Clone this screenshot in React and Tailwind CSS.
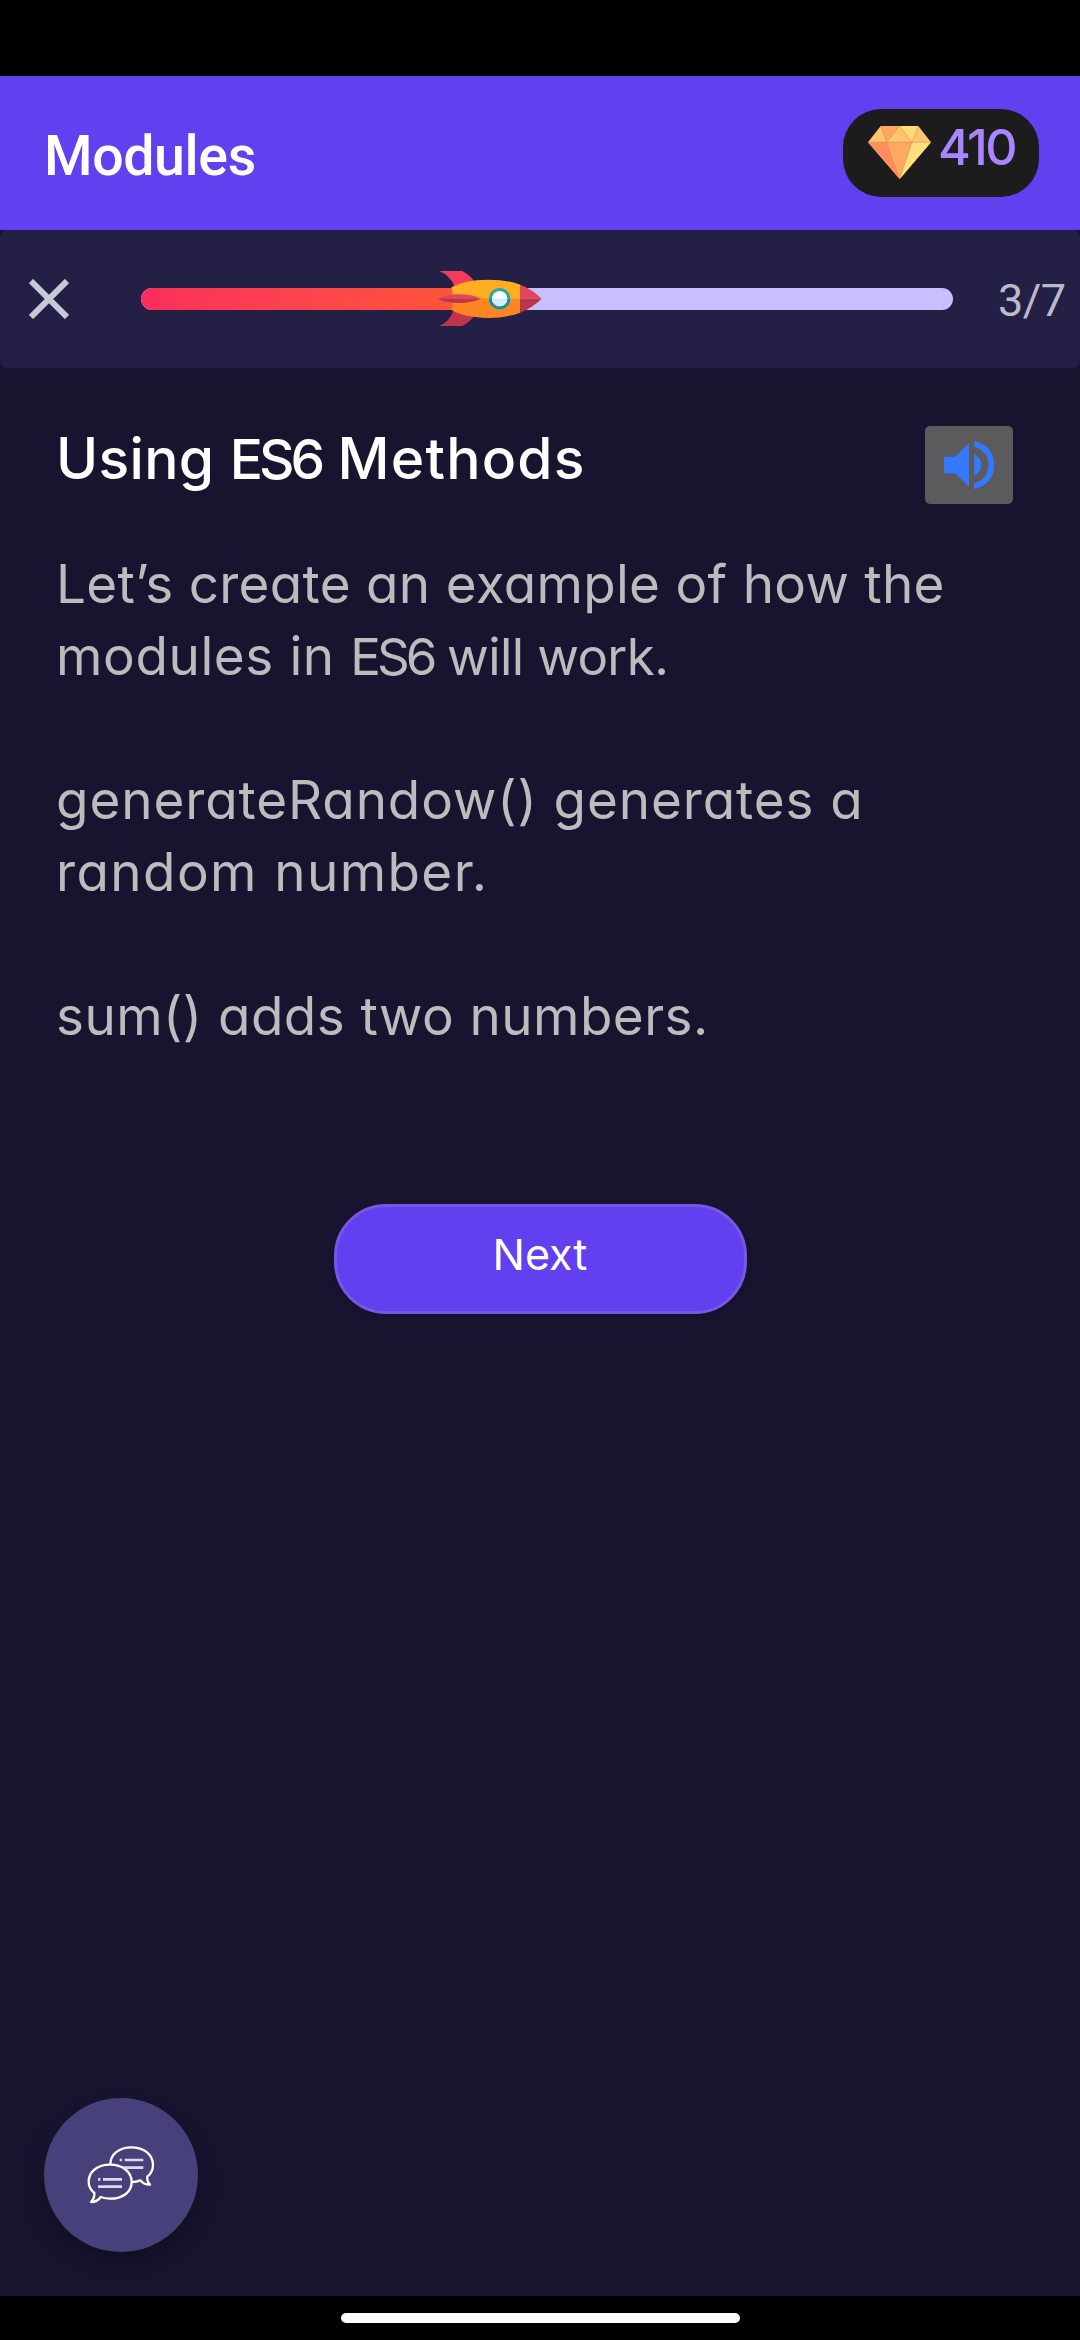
const inter = "font-[Inter,sans-serif] [font-feature-settings:'cv11'] whitespace-nowrap";

const lines = [
  [{ text: "Let’s create an example of how the", cls: "tracking-[0.3px]" }],
  [
    { text: "modules in ", cls: "tracking-[0.6px]" },
    { text: "ES6", cls: "text-[51px] tracking-[-4px]" },
    { text: " will work.", cls: "text-[51px] tracking-[-0.6px]" },
  ],
  [{ text: "\u00a0", cls: "" }],
  [{ text: "generateRandow() generates a", cls: "tracking-[0.9px]" }],
  [{ text: "random number.", cls: "tracking-[1.4px]" }],
  [{ text: "\u00a0", cls: "" }],
  [{ text: "sum() adds two numbers.", cls: "tracking-[0.45px]" }],
];

function Diamond() {
  return (
    <svg className="h-[53px] w-[63px]" viewBox="0 0 189 159">
      <path d="M0 49L38 0H151L189 49L95 159Z" fill="#ffc470" />
      <path d="M38 0H95L56 49Z" fill="#ffa660" />
      <path d="M95 0H151L132 49Z" fill="#ffdb78" />
      <path d="M0 49H56L95 159Z" fill="#ff8e5c" />
      <path d="M56 49H132L95 159Z" fill="#ffa863" />
      <path d="M132 49H189L95 159Z" fill="#ffe07c" />
      <path d="M0 49H189M38 0L56 49L95 159L132 49L151 0M56 49L95 0L132 49" fill="none" stroke="#a87840" strokeOpacity=".5" strokeWidth="2" />
    </svg>
  );
}

function Rocket() {
  return (
    <svg className="absolute left-[296px] top-[-17px] h-[55px] w-[105px]" viewBox="111 93 313 165">
      <path d="M117 93H186Q206 103 222 124L164 142Q151 107 117 93Z" fill="#f33b5c" />
      <path d="M117 258H186Q206 248 222 228L160 210Q149 244 117 258Z" fill="#c1354a" />
      <path d="M153 142Q190 120 265 119Q319 119 360 134V176H157Q158 158 153 142Z" fill="#ffae1f" />
      <path d="M153 210Q190 232 265 234Q319 233 360 218V176H157Q158 194 153 210Z" fill="#ff8424" />
      <path d="M359 134Q394 146 424 176H359Z" fill="#e0475c" />
      <path d="M359 218Q394 205 424 176H359Z" fill="#bb3448" />
      <path d="M111 176Q142 162 176 163Q216 163 242 176Z" fill="#e0475c" />
      <path d="M111 176Q142 189 176 189Q216 188 242 176Z" fill="#bb3448" />
      <circle cx="298" cy="176" r="32" fill="#2aa5a5" />
      <path d="M266 176A32 32 0 0 0 330 176Z" fill="#1f8f98" />
      <circle cx="298" cy="176" r="23" fill="#fff" />
      <path d="M275 176A23 23 0 0 0 321 176Z" fill="#d3ebfb" />
    </svg>
  );
}

function Chat() {
  return (
    <svg className="h-[58px] w-[68px]" viewBox="202 199 204 174" fill="none" stroke="#fff" strokeWidth="7" strokeLinejoin="round">
      <path d="M272 254C272 222 300 203 335 203C372 203 400 224 400 256C400 271 393 283 383 291Q381 305 391 315Q373 316 362 302Q350 307 337 307" />
      <path d="M224 340C212 330 207 319 207 306C207 275 235 255 271 255C308 255 336 276 336 307C336 338 308 357 272 357Q257 357 243 352Q233 367 214 367Q226 354 224 340Z" />
      <g stroke="#dedaf2" strokeWidth="8">
        <path d="M300 241H307M315 241H371M310 264H371M235 299H242M250 299H307M235 321H307" />
      </g>
    </svg>
  );
}

export default function App() {
  return (
    <div className="flex h-[2340px] w-[1080px] flex-col overflow-hidden bg-[#181430]">
      <div className="h-[76px] bg-black" />
      <header className="flex h-[154px] items-start justify-between bg-[#6240ef] pl-[44px] pr-[41px]">
        <h1 className="mt-[41px] font-[Roboto,sans-serif] text-[55.5px] font-medium leading-[80px] tracking-[-0.4px] text-white">Modules</h1>
        <div className="mt-[33px] flex h-[88px] w-[196px] rounded-[38px] bg-[#1c1c1c] pl-[25px] pt-[17px]">
          <Diamond />
          <span className={`${inter} ml-[7px] mt-[-9px] text-[50px] font-medium leading-[60px] tracking-[-2.5px] text-[#a985ff]`}>410</span>
        </div>
      </header>
      <div className="bg-[#120f26]">
        <div className="flex h-[138px] items-center rounded-[6px] bg-[#231f45] pl-[29px]">
          <svg className="h-[40px] w-[40px]" viewBox="0 0 40 40" stroke="#c5c9d8" strokeWidth="6"><path d="M2 2L38 38M38 2L2 38" /></svg>
          <div className="relative ml-[72px] h-[22px] w-[812px] rounded-full bg-[#c9bfff]">
            <div className="h-full w-[348px] rounded-l-full bg-linear-to-r from-[#fa2e5c] to-[#ff5733]" />
            <Rocket />
          </div>
          <span className="ml-[45px] pt-[4px] font-[Roboto,sans-serif] text-[45px] leading-[60px] tracking-[-0.5px] text-[#bcb9cb]">3/7</span>
        </div>
      </div>
      <main className="flex grow flex-col px-[56px]">
        <div className="flex h-[150px] items-start justify-between pr-[11px]">
          <h2 className={`${inter} mt-[51px] text-[57px] font-medium leading-[80px] text-white`}>
            <span className="tracking-[0.3px]">Using </span>
            <span className="text-[55px] tracking-[-4px]">ES6</span>
            <span className="tracking-[1.2px]"> Methods</span>
          </h2>
          <button className="mt-[58px] flex h-[78px] w-[88px] items-center justify-center rounded-[5px] bg-[#5b5b5d]">
            <svg className="h-[48px] w-[50px]" viewBox="132 123 150 144" fill="#3478ff">
              <path d="M132 170H165L207 130V260L165 220H132Z" />
              <path d="M222 162Q244 174 244 195Q244 216 222 228Z" />
              <path d="M222 123Q282 137 282 195Q282 253 222 267V250Q265 237 265 195Q265 153 222 140Z" />
            </svg>
          </button>
        </div>
        <div className="mt-[30px] text-[53px] leading-[72px] text-[#bcbcbe]">
          {lines.map((parts, i) => (
            <p key={i} className={`${inter} h-[72px]`}>
              {parts.map((part, j) => <span key={j} className={part.cls}>{part.text}</span>)}
            </p>
          ))}
        </div>
        <button className={`${inter} mt-[152px] h-[110px] w-[413px] self-center rounded-[52px] border-[3px] border-[#7857e4] bg-[#6240ef] pb-[9px] text-[43px] text-white shadow-md`}>Next</button>
        <button className="ml-[-12px] mt-auto mb-[44px] flex h-[154px] w-[154px] items-center justify-center rounded-full bg-[#46417a] shadow-[0_10px_20px_rgba(0,0,0,0.3)]">
          <Chat />
        </button>
      </main>
      <footer className="flex h-[44px] justify-center bg-black pt-[17px]">
        <div className="h-[10px] w-[399px] rounded-full bg-white" />
      </footer>
    </div>
  );
}
